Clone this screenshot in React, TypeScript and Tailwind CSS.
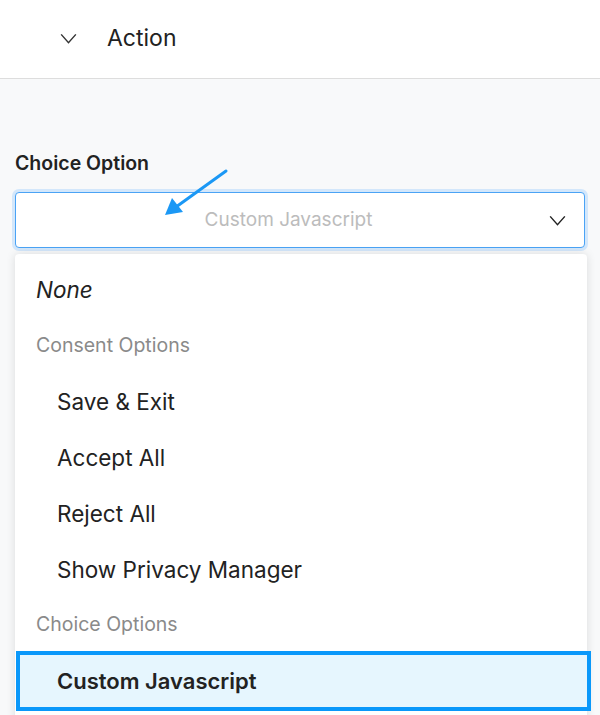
import React from 'react';

const font = { fontFamily: '"Inter", "Open Sans", sans-serif' };

function Chevron({ className }: { className?: string }) {
  return (
    <svg viewBox="0 0 18 12" className={className} fill="none" stroke="currentColor" strokeWidth="1.6">
      <path d="M1 1.5 L9 10.5 L17 1.5" />
    </svg>
  );
}

export default function App() {
  const consent = ['Save & Exit', 'Accept All', 'Reject All', 'Show Privacy Manager'];

  return (
    <div className="relative w-[600px] h-[715px] overflow-hidden bg-[#f8f9fa] text-[#222]" style={font}>
      {/* Header */}
      <div className="h-[79px] bg-white border-b border-[#dddddd] flex items-center pl-[60px] pb-[2px]">
        <Chevron className="w-[17px] h-[11px] text-[#333]" />
        <span className="ml-[30px] text-[23px]">Action</span>
      </div>

      {/* Field */}
      <div className="px-[15px] pt-[72px]">
        <div className="text-[19.5px] font-semibold leading-[24px]">Choice Option</div>
        <div className="mt-[17px] h-[56px] rounded-[4px] border border-[#4aa3f5] ring-[3px] ring-[#d3e7fb] bg-white flex items-center">
          <span className="flex-1 text-center text-[19px] text-[#bcbcbc] pl-[12px]">Custom Javascript</span>
          <Chevron className="w-[17px] h-[11px] mr-[18px] text-[#222]" />
        </div>
        <div className="mt-[435px] border-t border-[#d6d6d6]" />
      </div>

      {/* Arrow annotation */}
      <svg className="absolute left-[160px] top-[166px] w-[72px] h-[54px]" viewBox="0 0 72 54">
        <line x1="66" y1="5" x2="16" y2="41" stroke="#1b98f5" strokeWidth="3" strokeLinecap="round" />
        <path d="M5 49 L12 32 L23 46 Z" fill="#1b98f5" />
      </svg>

      {/* Dropdown menu */}
      <div className="absolute left-[15px] top-[254px] w-[572px] h-[470px] bg-white rounded-t-[4px] shadow-[0_0_10px_rgba(0,0,0,0.12)] pt-[8px] text-[22.5px]">
        <div className="h-[56px] flex items-center pl-[21px] italic">None</div>
        <div className="h-[56px] flex items-center pl-[21px] text-[19.5px] text-[#8a8a8a]">Consent Options</div>
        {consent.map((item) => (
          <div key={item} className="h-[56px] flex items-center pl-[42px]">
            {item}
          </div>
        ))}
        <div className="h-[53px] flex items-center pl-[21px] text-[19.5px] text-[#8a8a8a]">Choice Options</div>
        <div className="ml-px w-[575px] h-[60px] border-[4px] border-[#0a98fa] bg-[#e6f6fe] flex items-center pl-[37px] font-semibold text-[22px]">
          Custom Javascript
        </div>
      </div>
    </div>
  );
}
